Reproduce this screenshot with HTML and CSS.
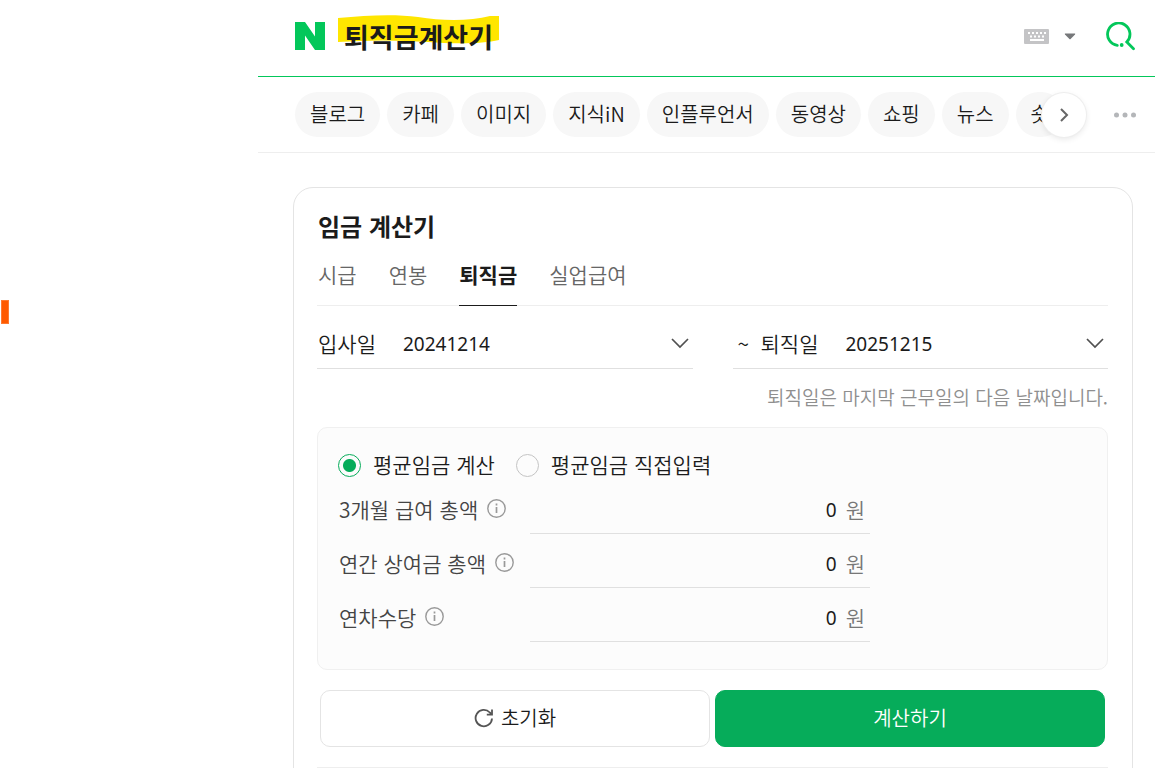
FILE: index.html
```html
<!DOCTYPE html>
<html lang="ko">
<head>
    <meta charset="UTF-8">
    <meta name="viewport" content="width=device-width, initial-scale=1.0">
    <title>퇴직금계산기</title>
    <link rel="stylesheet" href="styles.css">
</head>
<body>

<div class="page">
    <aside class="side">
        <div class="side-mark"></div>
    </aside>

    <div class="main">
        <header class="header">
            <a href="#" class="logo" aria-label="홈">
                <svg width="30" height="28" viewBox="0 0 30 28"><path d="M0 0h10l10 14.500V0h10v28H20L10 13.500V28H0z" fill="#03c75a"/></svg>
            </a>
            <form class="search">
                <svg class="highlight" width="161" height="30" viewBox="0 0 161 30"><path d="M0 3C30 0 58-1 80 2C105 6 132 6 152 1L161 1V25C145 29 115 29 90 27C60 25 30 25 0 27z" fill="#ffe600"/></svg>
                <input type="text" class="query" value="퇴직금계산기" aria-label="검색어">
                <button type="button" class="icon-btn" aria-label="키보드">
                    <svg width="25" height="15" viewBox="0 0 25 15">
                        <rect width="25" height="15" rx="1" fill="#c4c4c6"/>
                        <path d="M4 4h2M8 4h2M12 4h2M16 4h2M20 4h2M6 7.500h2M10 7.500h2M14 7.500h2M18 7.500h2M6 11h14" stroke="#fff" stroke-width="2"/>
                    </svg>
                </button>
                <button type="button" class="icon-btn" aria-label="자동완성">
                    <svg width="12" height="7" viewBox="0 0 12 7"><path d="M1.200.500h9.600q.8.200.2.900L6.600 6q-.6.600-1.200 0L1 1.400Q.4.700 1.200.500z" fill="#76787a"/></svg>
                </button>
                <button type="submit" class="icon-btn find" aria-label="검색">
                    <svg width="29" height="29" viewBox="0 0 29 29" fill="none" stroke="#03c75a" stroke-width="2.800" stroke-linecap="round">
                        <path d="M11.300 23.300A11.200 11.200 0 1 1 20.800 20L27.500 26.700"/>
                        <circle cx="15.700" cy="23" r="1.900" fill="#03c75a" stroke="none"/>
                    </svg>
                </button>
            </form>
        </header>

        <nav class="nav">
            <div class="chips">
                <a href="#">블로그</a>
                <a href="#">카페</a>
                <a href="#">이미지</a>
                <a href="#">지식iN</a>
                <a href="#">인플루언서</a>
                <a href="#">동영상</a>
                <a href="#">쇼핑</a>
                <a href="#">뉴스</a>
                <a href="#">숏</a>
            </div>
            <button type="button" class="next" aria-label="다음">
                <svg width="10" height="14" viewBox="0 0 10 14"><path d="M2 1l6 6-6 6" fill="none" stroke="#666" stroke-width="2"/></svg>
            </button>
            <button type="button" class="icon-btn more" aria-label="더보기">
                <svg width="22" height="6" viewBox="0 0 22 6" fill="#b4b6b9"><circle cx="2.500" cy="3" r="2.500"/><circle cx="11" cy="3" r="2.500"/><circle cx="19.500" cy="3" r="2.500"/></svg>
            </button>
        </nav>

        <section class="card">
            <h2>임금 계산기</h2>
            <div class="tabs">
                <a href="#">시급</a>
                <a href="#">연봉</a>
                <a href="#" class="active">퇴직금</a>
                <a href="#">실업급여</a>
            </div>

            <form>
                <div class="dates">
                    <div class="date">
                        <label for="startDate">입사일</label>
                        <input type="text" id="startDate" value="20241214">
                        <button type="button" class="icon-btn" aria-label="입사일 선택">
                            <svg width="18" height="11" viewBox="0 0 18 11"><path d="M1 1l8 8 8-8" fill="none" stroke="#505050" stroke-width="1.700"/></svg>
                        </button>
                    </div>
                    <div class="date">
                        <span class="tilde">~</span>
                        <label for="endDate">퇴직일</label>
                        <input type="text" id="endDate" value="20251215">
                        <button type="button" class="icon-btn" aria-label="퇴직일 선택">
                            <svg width="18" height="11" viewBox="0 0 18 11"><path d="M1 1l8 8 8-8" fill="none" stroke="#505050" stroke-width="1.700"/></svg>
                        </button>
                    </div>
                </div>
                <p class="note">퇴직일은 마지막 근무일의 다음 날짜입니다.</p>

                <div class="wage">
                    <div class="modes">
                        <input type="radio" name="mode" id="modeCalc" checked>
                        <label for="modeCalc">평균임금 계산</label>
                        <input type="radio" name="mode" id="modeDirect">
                        <label for="modeDirect">평균임금 직접입력</label>
                    </div>
                    <div class="row">
                        <div class="row-name">
                            <label for="pay">3개월 급여 총액</label>
                            <button type="button" class="icon-btn" aria-label="급여 도움말">
                                <svg width="19" height="19" viewBox="0 0 19 19"><circle cx="9.500" cy="9.500" r="8.700" fill="none" stroke="#999" stroke-width="1.400"/><path d="M9.500 8v6M9.500 4.500v2" stroke="#999" stroke-width="1.700"/></svg>
                            </button>
                        </div>
                        <div class="amount"><input type="text" id="pay" value="0"><span>원</span></div>
                    </div>
                    <div class="row">
                        <div class="row-name">
                            <label for="bonus">연간 상여금 총액</label>
                            <button type="button" class="icon-btn" aria-label="상여금 도움말">
                                <svg width="19" height="19" viewBox="0 0 19 19"><circle cx="9.500" cy="9.500" r="8.700" fill="none" stroke="#999" stroke-width="1.400"/><path d="M9.500 8v6M9.500 4.500v2" stroke="#999" stroke-width="1.700"/></svg>
                            </button>
                        </div>
                        <div class="amount"><input type="text" id="bonus" value="0"><span>원</span></div>
                    </div>
                    <div class="row">
                        <div class="row-name">
                            <label for="leave">연차수당</label>
                            <button type="button" class="icon-btn" aria-label="연차수당 도움말">
                                <svg width="19" height="19" viewBox="0 0 19 19"><circle cx="9.500" cy="9.500" r="8.700" fill="none" stroke="#999" stroke-width="1.400"/><path d="M9.500 8v6M9.500 4.500v2" stroke="#999" stroke-width="1.700"/></svg>
                            </button>
                        </div>
                        <div class="amount"><input type="text" id="leave" value="0"><span>원</span></div>
                    </div>
                </div>

                <div class="buttons">
                    <button type="reset" class="btn">
                        <svg width="20" height="20" viewBox="0 0 20 20" fill="none" stroke="#555" stroke-width="1.800"><path d="M18 10.500A8.200 8.200 0 1 1 15.800 4.500L17.500 6.200"/><path d="M18 1.500V6.600H12.800"/></svg>
                        초기화
                    </button>
                    <button type="button" class="btn btn-green">계산하기</button>
                </div>
            </form>
            <div class="result"></div>
        </section>
    </div>
</div>

</body>
</html>
```
FILE: styles.css
```css
* {
    box-sizing: border-box;
}
body {
    margin: 0;
    background-color: #fff;
    color: #1b1b1b;
    font-family: "Noto Sans CJK KR", sans-serif;
    font-weight: 350;
    font-size: 21px;
    line-height: 30px;
    overflow: hidden;
}
a {
    color: inherit;
    text-decoration: none;
}
svg {
    display: block;
}
input, button {
    font-family: inherit;
    font-weight: inherit;
    color: inherit;
    border: none;
    background: none;
    margin: 0;
    padding: 0;
    outline: none;
}
button {
    cursor: pointer;
}
.icon-btn {
    flex: none;
}
.page {
    display: grid;
    grid-template-columns: 258px minmax(0, 1fr);
    height: 100vh;
}
.side {
    padding: 300px 0 0 1px;
}
.side-mark {
    width: 8px;
    height: 24px;
    background-color: #ff5a00;
    border: 1px solid #ff7a30;
}

/* search bar */
.header {
    display: flex;
    align-items: center;
    height: 77px;
    padding: 0 20px 4px 37px;
    border-bottom: 1px solid #03c75a;
}
.search {
    position: relative;
    flex: 1;
    display: flex;
    align-items: center;
    margin-left: 13px;
}
.highlight {
    position: absolute;
    left: 0;
    top: 0;
}
.query {
    position: relative;
    flex: 1;
    min-width: 0;
    height: 42px;
    padding-left: 6px;
    font-size: 27px;
    font-weight: 700;
}
.search .icon-btn {
    margin-left: 15px;
}
.search .find {
    margin-left: 30px;
}

/* category chips */
.nav {
    position: relative;
    display: flex;
    align-items: center;
    height: 76px;
    padding: 0 20px 0 37px;
    border-bottom: 1px solid #eee;
}
.chips {
    flex: 1;
    display: flex;
    gap: 7px;
    white-space: nowrap;
}
.chips a {
    flex: none;
    height: 45px;
    padding: 0 15px;
    border-radius: 23px;
    background-color: #f7f7f7;
    font-size: 20px;
    line-height: 43px;
}
.next {
    position: absolute;
    right: 69px;
    top: 16px;
    width: 44px;
    height: 44px;
    border-radius: 50%;
    background-color: #fff;
    box-shadow: 0 0 0 1px #eee, 0 2px 6px rgba(0,0,0,0.1);
    display: flex;
    align-items: center;
    justify-content: center;
}
.more {
    margin-left: 50px;
}

/* calculator */
.card {
    margin: 34px 22px 0 35px;
    padding: 23px 24px 24px 23px;
    border: 1px solid #e4e4e4;
    border-radius: 20px;
}
h2 {
    margin: 0 1px;
    font-size: 24px;
    line-height: 30px;
}
.tabs {
    display: flex;
    gap: 32px;
    height: 65px;
    padding: 0 1px;
    border-bottom: 1px solid #eee;
    color: #666;
}
.tabs a {
    height: 65px;
    padding-top: 18px;
}
.tabs .active {
    color: #1b1b1b;
    font-weight: 700;
    border-bottom: 1px solid #1b1b1b;
}
.dates {
    display: grid;
    grid-template-columns: 1fr 1fr;
    gap: 40px;
}
.date {
    display: flex;
    align-items: center;
    height: 63px;
    padding: 12px 4px 0 1px;
    border-bottom: 1px solid #e0e0e0;
}
.date input {
    flex: 1;
    min-width: 0;
    margin-left: 27px;
    padding-top: 2px;
    font-family: "Noto Sans", sans-serif;
    font-size: 19px;
    font-weight: 400;
}
.tilde {
    width: 27px;
    padding-left: 4px;
}
.note {
    margin: 13px 0 15px;
    color: #8f8f8f;
    font-size: 19px;
    text-align: right;
}
.wage {
    padding: 22px 20px 27px;
    border: 1px solid #f0f0f0;
    border-radius: 10px;
    background-color: #fcfcfc;
}
.modes {
    display: flex;
    align-items: center;
}
.modes input {
    appearance: none;
    width: 23px;
    height: 23px;
    border: 1px solid #c4c4c4;
    border-radius: 50%;
}
.modes input:checked {
    border-color: #06ac5a;
    background: radial-gradient(circle, #06ac5a 6px, transparent 7px);
}
.modes label {
    margin: 0 21px 0 12px;
    line-height: 28px;
    padding-bottom: 2px;
}
.row {
    display: grid;
    grid-template-columns: 192px minmax(0, 340px);
    height: 54px;
}
.row-name, .amount {
    display: flex;
    align-items: center;
}
.row-name {
    gap: 9px;
    padding: 3px 0 0 1px;
    color: #444;
}
.amount {
    padding: 5px 5px 0 0;
    border-bottom: 1px solid #e0e0e0;
    color: #777;
}
.amount input {
    flex: 1;
    min-width: 0;
    margin-right: 9px;
    padding-top: 2px;
    color: #1b1b1b;
    font-family: "Noto Sans", sans-serif;
    font-size: 19px;
    font-weight: 400;
    text-align: right;
}
.buttons {
    display: grid;
    grid-template-columns: 1fr 1fr;
    gap: 5px;
    padding: 20px 3px;
}
.btn {
    display: flex;
    align-items: center;
    justify-content: center;
    gap: 7px;
    height: 57px;
    padding-bottom: 2px;
    border: 1px solid #e4e4e4;
    border-radius: 10px;
    font-size: 20px;
}
.btn-green {
    border-color: #06ac5a;
    background-color: #06ac5a;
    color: #fff;
}
.result {
    border-top: 1px solid #eee;
}
```
